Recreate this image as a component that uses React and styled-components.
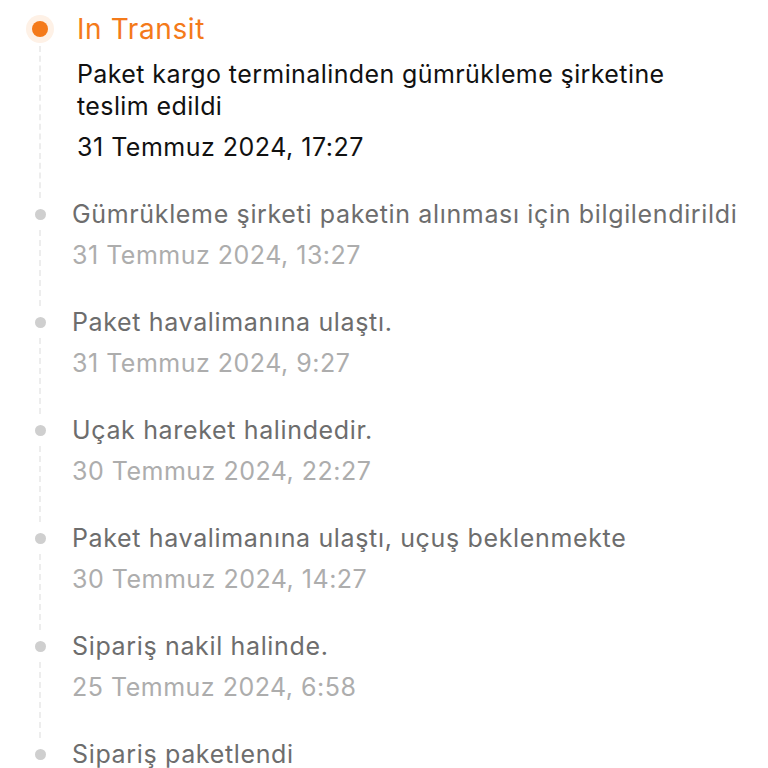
import React from 'react';
import styled, { createGlobalStyle } from 'styled-components';

const GlobalStyle = createGlobalStyle`
  html, body {
    margin: 0;
    padding: 0;
    background: #ffffff;
  }
  body {
    font-family: Inter, "Liberation Sans", Arial, sans-serif;
    -webkit-font-smoothing: antialiased;
  }
`;

const Timeline = styled.ul`
  list-style: none;
  margin: 0;
  padding: 12px 0 0 0;
  width: 768px;
  height: 768px;
  overflow: hidden;
  box-sizing: border-box;
`;

const Item = styled.li`
  display: flex;
  align-items: stretch;
`;

const Rail = styled.div`
  width: 28px;
  margin-left: 26px;
  display: flex;
  flex-direction: column;
  align-items: center;
`;

const DotSlot = styled.div`
  height: ${p => (p.$active ? '34px' : '32px')};
  display: flex;
  align-items: center;
  justify-content: center;
  flex-shrink: 0;
`;

const Dot = styled.span`
  display: block;
  border-radius: 50%;
  width: ${p => (p.$active ? '16px' : '11px')};
  height: ${p => (p.$active ? '16px' : '11px')};
  background: ${p => (p.$active ? '#f47a1a' : '#cfcfcf')};
  box-shadow: ${p => (p.$active ? '0 0 0 6px #fef1e6' : 'none')};
`;

const Line = styled.span`
  flex: 1;
  width: 0;
  border-left: 2px dashed #ededed;
`;

const Content = styled.div`
  padding-left: ${p => (p.$active ? '23px' : '18px')};
  padding-bottom: 35px;
`;

const Status = styled.div`
  font-size: 28px;
  line-height: 34px;
  letter-spacing: 0.6px;
  color: #f47a1a;
`;

const Title = styled.div`
  font-size: 25px;
  line-height: 32px;
  letter-spacing: ${p => (p.$active ? '0.4px' : '0.65px')};
  color: ${p => (p.$active ? '#111111' : '#6d6d6d')};
  margin-top: ${p => (p.$active ? '12px' : '0')};
  max-width: ${p => (p.$active ? '620px' : 'none')};
  white-space: ${p => (p.$active ? 'normal' : 'nowrap')};
`;

const Time = styled.div`
  font-size: 25px;
  line-height: 32px;
  letter-spacing: 0.5px;
  margin-top: 9px;
  color: ${p => (p.$active ? '#111111' : '#adadad')};
`;

const events = [
  { title: 'Gümrükleme şirketi paketin alınması için bilgilendirildi', time: '31 Temmuz 2024, 13:27' },
  { title: 'Paket havalimanına ulaştı.', time: '31 Temmuz 2024, 9:27' },
  { title: 'Uçak hareket halindedir.', time: '30 Temmuz 2024, 22:27' },
  { title: 'Paket havalimanına ulaştı, uçuş beklenmekte', time: '30 Temmuz 2024, 14:27' },
  { title: 'Sipariş nakil halinde.', time: '25 Temmuz 2024, 6:58' },
  { title: 'Sipariş paketlendi' },
];

const App = () => {
  return (
    <>
      <GlobalStyle />
      <Timeline>
        <Item>
          <Rail>
            <DotSlot $active>
              <Dot $active />
            </DotSlot>
            <Line />
          </Rail>
          <Content $active>
            <Status>In Transit</Status>
            <Title $active>Paket kargo terminalinden gümrükleme şirketine teslim edildi</Title>
            <Time $active>31 Temmuz 2024, 17:27</Time>
          </Content>
        </Item>
        {events.map(ev => (
          <Item key={ev.title}>
            <Rail>
              <DotSlot>
                <Dot />
              </DotSlot>
              <Line />
            </Rail>
            <Content>
              <Title>{ev.title}</Title>
              {ev.time && <Time>{ev.time}</Time>}
            </Content>
          </Item>
        ))}
      </Timeline>
    </>
  );
};

export default App;
